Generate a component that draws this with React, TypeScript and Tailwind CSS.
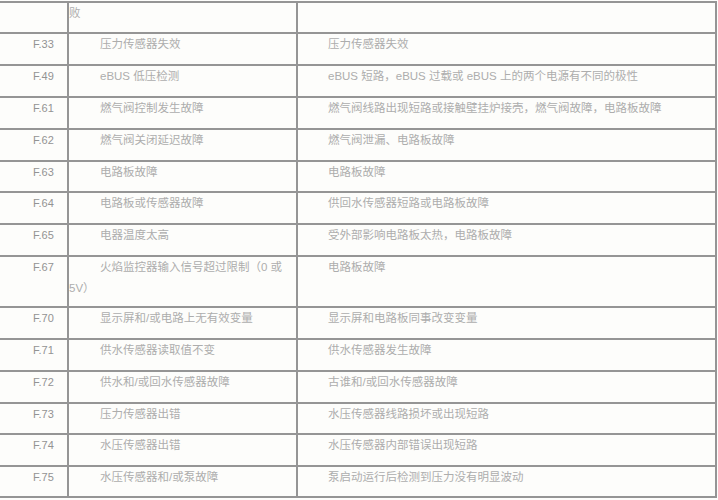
import React from "react";

type Row = { code: string; a: React.ReactNode; b: React.ReactNode; h: string; noIndent?: boolean };

const rows: Row[] = [
  { code: "", a: "败", b: "", h: "h-[31px]", noIndent: true },
  { code: "F.33", a: "压力传感器失效", b: "压力传感器失效", h: "h-[32px]" },
  { code: "F.49", a: "eBUS 低压检测", b: "eBUS 短路，eBUS 过载或 eBUS 上的两个电源有不同的极性", h: "h-[32px]" },
  { code: "F.61", a: "燃气阀控制发生故障", b: "燃气阀线路出现短路或接触壁挂炉接壳，燃气阀故障，电路板故障", h: "h-[32px]" },
  { code: "F.62", a: "燃气阀关闭延迟故障", b: "燃气阀泄漏、电路板故障", h: "h-[32px]" },
  { code: "F.63", a: "电路板故障", b: "电路板故障", h: "h-[31px]" },
  { code: "F.64", a: "电路板或传感器故障", b: "供回水传感器短路或电路板故障", h: "h-[32px]" },
  { code: "F.65", a: "电器温度太高", b: "受外部影响电路板太热，电路板故障", h: "h-[32px]" },
  {
    code: "F.67",
    a: (
      <>
        火焰监控器输入信号超过限制（0 或<br />
        5V）
      </>
    ),
    b: "电路板故障",
    h: "h-[51px]",
  },
  { code: "F.70", a: "显示屏和/或电路上无有效变量", b: "显示屏和电路板同事改变变量", h: "h-[32px]" },
  { code: "F.71", a: "供水传感器读取值不变", b: "供水传感器发生故障", h: "h-[32px]" },
  { code: "F.72", a: "供水和/或回水传感器故障", b: "古谁和/或回水传感器故障", h: "h-[32px]" },
  { code: "F.73", a: "压力传感器出错", b: "水压传感器线路损坏或出现短路", h: "h-[31px]" },
  { code: "F.74", a: "水压传感器出错", b: "水压传感器内部错误出现短路", h: "h-[32px]" },
  { code: "F.75", a: "水压传感器和/或泵故障", b: "泵启动运行后检测到压力没有明显波动", h: "h-[31px]" },
];

export default function App() {
  return (
    <div
      className="w-[718px] h-[500px] bg-[#fdfdfb] pt-[1px] overflow-hidden"
      style={{ fontFamily: '"Liberation Sans", "Noto Sans CJK SC", sans-serif' }}
    >
      <div className="w-[717px] border-r-2 border-b-2 border-[#959595]">
        {rows.map((r, i) => (
          <div key={i} className={`flex ${r.h} border-t-2 border-[#959595]`}>
            <div className="w-[67px] shrink-0 pl-[33px] text-[11px] leading-[21px] text-[#939393]">
              {r.code}
            </div>
            <div
              className={`w-[229px] shrink-0 border-l-2 border-[#959595] text-[11.5px] leading-[21px] text-[#adadad] ${
                r.noIndent ? "" : "indent-[31px]"
              }`}
            >
              {r.a}
            </div>
            <div className="flex-1 border-l-2 border-[#959595] pl-[30px] text-[11.5px] leading-[21px] text-[#adadad] whitespace-nowrap">
              {r.b}
            </div>
          </div>
        ))}
      </div>
    </div>
  );
}
